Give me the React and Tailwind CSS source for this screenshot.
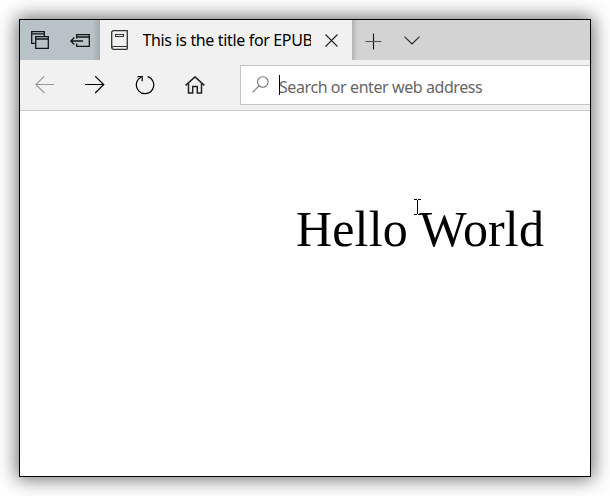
function Icon({ w, h, children, className = '' }) {
  return (
    <svg
      width={w}
      height={h}
      viewBox={`0 0 ${w} ${h}`}
      fill="none"
      stroke="currentColor"
      strokeWidth="1.1"
      className={`block shrink-0 ${className}`}
      aria-hidden="true"
    >
      {children}
    </svg>
  );
}

function TabStrip() {
  return (
    <div className="flex h-10 bg-[#d3d3d3]">
      <div className="flex w-20 items-center bg-linear-to-r from-[#b9c3c7] from-90% to-[#a3abae] pl-[11px] text-[#101416]">
        <Icon w={18} h={18}>
          <path d="M4 12.3H0.7V0.7h12.6V5M0.7 2.8h12.6" strokeWidth="1.3" />
          <path d="M4.7 5.7h12.6v11.6H4.7zM4.7 8h12.6" strokeWidth="1.3" />
        </Icon>
        <Icon w={20} h={13} className="ml-[21px]">
          <path d="M6.7 4.5V0.7h12.6v11.6H6.7V9.5M6.7 3h12.6" strokeWidth="1.3" />
          <path d="M13 7H0.8M4.3 3.5L0.8 7l3.5 3.5" strokeWidth="1.3" />
        </Icon>
      </div>
      <div className="flex w-[252px] items-center bg-[#f1f1f1] pl-[11px]">
        <Icon w={17} h={20} className="text-[#333]">
          <path d="M16.3 19.3V0.7H2.5A1.8 1.8 0 0 0 0.7 2.5v15a1.8 1.8 0 0 0 1.8 1.8h13.8" strokeWidth="1.3" />
          <path d="M16.3 16.5H2.7a2 2 0 0 0-2 1.2" />
          <path d="M4.5 4.5h8v2h-8z" />
        </Icon>
        <div className="ml-[14.5px] w-[168.5px] overflow-hidden text-[16px] leading-5 tracking-[-0.35px] whitespace-nowrap text-black">
          This is the title for EPUB
        </div>
        <Icon w={13} h={13} className="ml-[14px] text-[#222]">
          <path d="M0.5 0.5l12 12M12.5 0.5l-12 12" />
        </Icon>
      </div>
      <div className="flex flex-1 items-center bg-linear-to-r from-[#b3b3b3] to-[#d3d3d3] to-[6px] pl-[13px] text-[#222]">
        <Icon w={17} h={17} className="mt-[2px]">
          <path d="M8.5 0.5v16" stroke="#111" />
          <path d="M0.5 8.5h16" stroke="#555" />
        </Icon>
        <Icon w={16} h={9} className="ml-[22px]">
          <path d="M0.5 0.7l7.5 7.3 7.5-7.3" />
        </Icon>
      </div>
    </div>
  );
}

function Toolbar() {
  return (
    <div className="flex h-[51px] border-b border-[#cbcbcb] bg-[#f1f1f1] pl-[15px] text-black">
      <Icon w={19} h={18} className="mt-4 text-[#9a9a9a]">
        <path d="M19 8.5H0.8M9.3 0.3L0.8 8.5l8.5 8.5" />
      </Icon>
      <Icon w={20} h={18} className="mt-4 ml-[31px]">
        <path d="M0 8.5h19M10.2 0.3l8.5 8.2-8.5 8.5" strokeWidth="1.2" />
      </Icon>
      <Icon w={20} h={20} className="mt-[15px] ml-[30px]">
        <path d="M12.6 1.6A8.7 8.7 0 1 1 6 2.2" strokeWidth="1.2" />
        <path d="M2.6 1.6h4.6v4.6" strokeWidth="1.2" />
      </Icon>
      <Icon w={20} h={18} className="mt-4 ml-[30px] text-[#222]">
        <path d="M0.6 9.4L10 0.9l9.4 8.5" strokeWidth="1.5" />
        <path d="M3.5 7.5v9.6h4.2v-6.6h4.6v6.6h4.2V7.5" strokeWidth="1.5" />
      </Icon>
      <div className="mt-[5px] ml-[35px] flex h-10 flex-1 items-center border border-r-0 border-[#c3c3c3] bg-white">
        <Icon w={17} h={17} className="ml-[11px] -mt-px text-[#777]">
          <circle cx="10.8" cy="6" r="5.3" />
          <path d="M7.1 9.9L0.5 16.3" />
        </Icon>
        <div className="ml-[10px] h-5 w-px bg-black" />
        <div className="-ml-px pt-[3px] text-[16px] leading-5 tracking-[-0.42px] whitespace-nowrap text-[#666]">
          Search or enter web address
        </div>
      </div>
    </div>
  );
}

export default function App() {
  return (
    <div className="h-[496px] w-[610px] overflow-hidden bg-white pt-[19px] pl-[19px] font-['Noto_Sans','Open_Sans',sans-serif]">
      <div className="flex h-[458px] w-[572px] flex-col border border-black bg-white shadow-[0_0_18px_2px_rgba(0,0,0,0.58)]">
        <TabStrip />
        <Toolbar />
        <main className="relative flex-1 pt-[90px] pl-[276px]">
          <h1 className="font-['Liberation_Serif','Times_New_Roman',serif] text-[50px] leading-[56px] tracking-[0.15px] whitespace-nowrap text-black">
            Hello World
          </h1>
          <Icon w={7} h={16} className="absolute top-[88px] left-[394px] text-black">
            <path d="M0 0.5h3M4 0.5h3M3.5 1v14M0 15.5h3M4 15.5h3" strokeWidth="1" />
          </Icon>
        </main>
      </div>
    </div>
  );
}
